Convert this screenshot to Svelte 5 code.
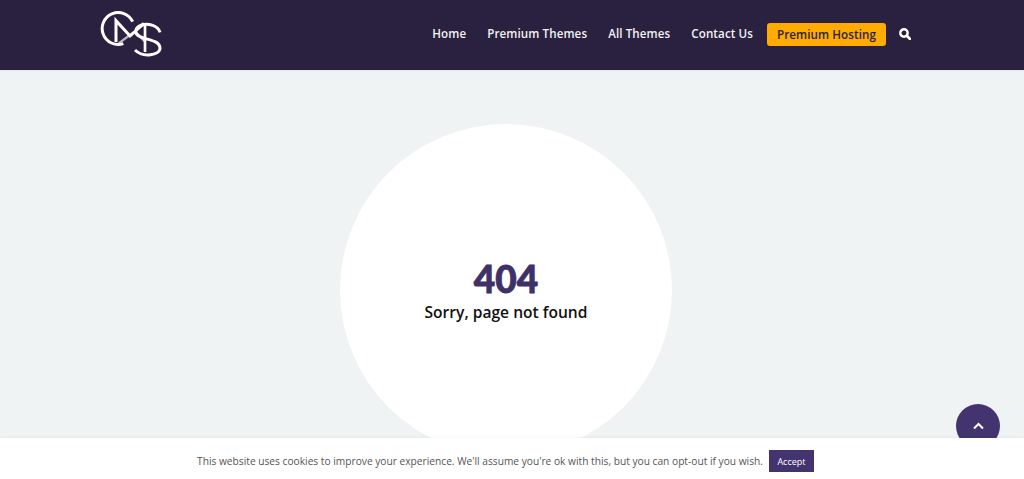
<script>
	const links = ['Home', 'Premium Themes', 'All Themes', 'Contact Us'];
</script>

<div class="page">
	<header>
		<svg class="logo" width="62" height="50" viewBox="60 27 186 150" fill="none" stroke="#fff" stroke-width="9">
			<path d="M116 130L160 97M166 95L194 124" stroke="#b9b6c2" stroke-width="7" />
			<path d="M158 65A48 48 0 1 0 130 131" />
			<path d="M108 126V62L150 108L192 70" />
			<path d="M195 74V156" stroke-width="8" />
			<path d="M240 97C235 78 205 68 185 75C165 82 160 100 180 110C200 120 240 120 240 145C240 165 190 175 165 150" />
		</svg>
		<nav>
			{#each links as link}
				<a href="#top">{link}</a>
			{/each}
			<a class="cta" href="#top">Premium Hosting</a>
			<svg class="search" width="12" height="12" viewBox="0 0 13 13" fill="none" stroke="#fff">
				<circle cx="5.4" cy="5.4" r="4" stroke-width="2.6" />
				<path d="M8.4 8.4L12 12" stroke-width="3" stroke-linecap="round" />
			</svg>
		</nav>
	</header>

	<main>
		<div class="circle">
			<h1>404</h1>
			<p>Sorry, page not found</p>
		</div>
	</main>

	<a class="to-top" href="#top" aria-label="Back to top">
		<svg width="11" height="8" viewBox="0 0 11 8" fill="none" stroke="#fff" stroke-width="2">
			<path d="M1 6.5L5.5 2L10 6.5" />
		</svg>
	</a>

	<div class="cookie">
		<span>This website uses cookies to improve your experience. We'll assume you're ok with this, but you can opt-out if you wish.</span>
		<button>Accept</button>
	</div>
</div>

<style>
	:global(body) {
		margin: 0;
		font-family: "Open Sans", "Noto Sans", sans-serif;
	}
	.page {
		position: relative;
		height: 479px;
		overflow: hidden;
		background: #eff3f4;
	}
	header {
		height: 70px;
		box-sizing: border-box;
		background: #2a2140;
		box-shadow: 0 1px 0 #e4e8ea;
		display: flex;
		align-items: flex-start;
		justify-content: space-between;
		padding: 9px 113px 0 100px;
	}
	nav {
		display: flex;
		align-items: center;
		height: 49px;
	}
	nav a {
		color: #f2f1f4;
		font-size: 11.6px;
		letter-spacing: 0.1px;
		font-weight: 600;
		text-decoration: none;
		margin-right: 21px;
	}
	nav .cta {
		background: #ffab00;
		color: #2a2140;
		border-radius: 3px;
		width: 119px;
		height: 23px;
		line-height: 23px;
		text-align: center;
		margin: 1px 13px 0 -7px;
	}
	.search {
		margin-top: 1px;
	}
	main {
		display: flex;
		justify-content: center;
		padding-top: 54px;
		padding-right: 12px;
	}
	.circle {
		width: 332px;
		height: 332px;
		border-radius: 50%;
		background: #fff;
		display: flex;
		flex-direction: column;
		align-items: center;
		padding-top: 133px;
		box-sizing: border-box;
	}
	h1 {
		margin: 0;
		font-family: Lato, sans-serif;
		font-size: 37px;
		line-height: 44px;
		font-weight: 900;
		-webkit-text-stroke: 0.8px #3e3169;
		color: #3e3169;
	}
	p {
		margin: 0;
		font-size: 15.6px;
		line-height: 22px;
		font-weight: 600;
		color: #111;
	}
	.to-top {
		position: absolute;
		left: 956px;
		top: 404px;
		width: 44px;
		height: 44px;
		border-radius: 50%;
		background: #43346f;
		display: flex;
		align-items: center;
		justify-content: center;
		box-sizing: border-box;
	}
	.cookie {
		position: absolute;
		left: 0;
		right: 0;
		bottom: 0;
		height: 41px;
		background: #fff;
		box-shadow: 0 0 3px rgba(0, 0, 0, 0.08);
		display: flex;
		align-items: center;
		justify-content: center;
		gap: 6px;
		padding: 5px 13px 0 0;
		box-sizing: border-box;
		font-size: 10.2px;
		color: #555;
	}
	button {
		background: #43346f;
		color: #fff;
		border: 0;
		font: inherit;
		font-size: 9px;
		width: 45px;
		height: 22px;
		padding: 0;
	}
</style>
